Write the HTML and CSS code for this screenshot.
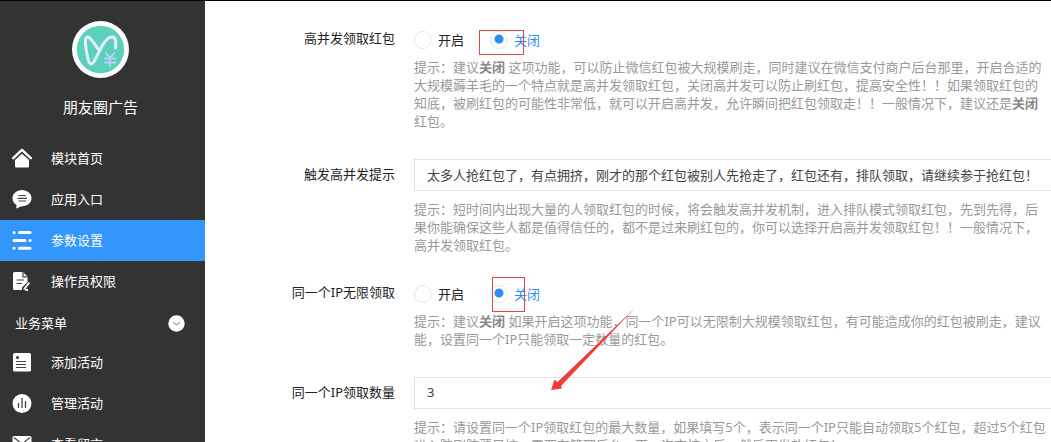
FILE: index.html
```html
<!DOCTYPE html>
<html lang="zh-CN">
<head>
<meta charset="utf-8">
<title>参数设置</title>
<link rel="stylesheet" href="styles.css">
</head>
<body>
<div class="app">
  <aside class="sidebar">
    <div class="profile">
      <svg class="avatar" viewBox="0 0 57 57" aria-hidden="true">
        <circle cx="28.5" cy="28.5" r="28.5" fill="#fff"/>
        <circle cx="28.5" cy="28.5" r="23.7" fill="#5bd0bb"/>
        <g fill="none" stroke="#e6edff" stroke-linecap="round" stroke-linejoin="round">
          <path stroke-width="3" d="M27.500 30C22 22 18 16 15.500 16C12 16 13.500 25 15 33C16 39 17 43 19 43C22 43 25 34 29 27C32 21 36 16 40 16C44.500 16 44 21 43.500 27"/>
          <path stroke="#b9d2fb" stroke-width="2" d="M34 32L38 37L42 32M38 37V45M33 37.500H43.500M33 41.500H43.500"/>
        </g>
      </svg>
      <div class="name">朋友圈广告</div>
    </div>
    <nav class="menu">
      <a class="item" href="#">
        <svg class="icon" viewBox="0 0 20 20"><path d="M1.200 10.200L10 1.800L18.800 10.200" fill="none" stroke="#fff" stroke-width="2.400" stroke-linecap="round" stroke-linejoin="round"/><path fill="#fff" d="M10 5.800L17 12V18.500Q17 19.500 16 19.500H4Q3 19.500 3 18.500V12Z"/></svg>
        模块首页</a>
      <a class="item" href="#">
        <svg class="icon" viewBox="0 0 20 20"><path fill="#fff" d="M10 1C15.500 1 19.500 4.800 19.500 9.200C19.500 14 15 17 10.500 17.200C8.500 17.400 7 18.500 4.200 19.600L4.500 16C2 14.500 .5 12 .5 9.200C.5 4.800 4.500 1 10 1Z"/><path d="M6.500 6.500H14M5.500 9.300H15M6.500 12H14" stroke="#444" stroke-width="1.200"/></svg>
        应用入口</a>
      <a class="item active" href="#" aria-current="page">
        <svg class="icon" viewBox="0 0 20 20"><path d="M2 2.500H2.100M7.500 2.500H18M2 10.500H13M18 10.500H18.100M2 18.300H2.100M7.500 18.300H18" stroke="#fff" stroke-width="3" stroke-linecap="round"/></svg>
        参数设置</a>
      <a class="item" href="#">
        <svg class="icon" viewBox="0 0 20 20"><path fill="#fff" d="M2.500 1H11L15.500 5.500V11L10 16.500V19H2.500Q1 19 1 17.500V2.500Q1 1 2.500 1Z"/><path fill="none" stroke="#444" stroke-width="1.200" d="M11 1V5.800H15.500M4.500 9H12M4.500 12.500H10"/><path d="M17.300 11.500L12 18.500M13.500 19H16" stroke="#fff" stroke-width="2"/></svg>
        操作员权限</a>
      <button class="section" type="button">业务菜单
        <svg class="chevron" viewBox="0 0 17 17" aria-hidden="true"><circle cx="8.500" cy="8.500" r="8.200" fill="#fff"/><path d="M5 7.200L8.500 10L12 7.200" fill="none" stroke="#aaa" stroke-width="1.300"/></svg>
      </button>
      <a class="item" href="#">
        <svg class="icon" viewBox="0 0 20 20"><rect x="1" y="1" width="18" height="18.500" rx="1.500" fill="#fff"/><circle cx="5.500" cy="5.500" r="1.500" fill="#333"/><path d="M4 9.500H14M4 12.500H14M4 15.500H14" stroke="#444" stroke-width="1.200"/></svg>
        添加活动</a>
      <a class="item" href="#">
        <svg class="icon" viewBox="0 0 20 20"><circle cx="10" cy="10.500" r="9.500" fill="#fff"/><path d="M6.500 10V15M10 5V15M13.500 8V15" stroke="#444" stroke-width="1.300"/></svg>
        管理活动</a>
      <a class="item" href="#">
        <svg class="icon" viewBox="0 0 20 20"><rect x=".5" y="2" width="19" height="16" rx="1.500" fill="#fff"/><path d="M2 3.500L10 10L18 3.500" fill="none" stroke="#444" stroke-width="1.200"/></svg>
        查看留言</a>
    </nav>
  </aside>

  <main class="main">
    <form class="form">
      <div class="row" role="radiogroup" aria-labelledby="l1">
        <span class="label" id="l1">高并发领取红包</span>
        <div class="field">
          <div class="choices">
            <label class="choice"><input type="radio" name="burst">开启</label>
            <label class="choice"><input type="radio" name="burst" checked>关闭</label>
          </div>
          <p class="help">提示：建议<b>关闭</b> 这项功能，可以防止微信红包被大规模刷走，同时建议在微信支付商户后台那里，开启合适的<br>大规模薅羊毛的一个特点就是高并发领取红包，关闭高并发可以防止刷红包，提高安全性！！如果领取红包的<br>知底，被刷红包的可能性非常低，就可以开启高并发，允许瞬间把红包领取走！！一般情况下，建议还是<b>关闭</b><br>红包。</p>
        </div>
      </div>
      <div class="row tall">
        <label class="label" for="tip">触发高并发提示</label>
        <div class="field">
          <input class="text" id="tip" type="text" value="太多人抢红包了，有点拥挤，刚才的那个红包被别人先抢走了，红包还有，排队领取，请继续参于抢红包！">
          <p class="help">提示：短时间内出现大量的人领取红包的时候，将会触发高并发机制，进入排队模式领取红包，先到先得，后<br>果你能确保这些人都是值得信任的，都不是过来刷红包的，你可以选择开启高并发领取红包！！一般情况下，<br>高并发领取红包。</p>
        </div>
      </div>
      <div class="row" role="radiogroup" aria-labelledby="l3">
        <span class="label" id="l3">同一个IP无限领取</span>
        <div class="field">
          <div class="choices">
            <label class="choice"><input type="radio" name="ip">开启</label>
            <label class="choice"><input type="radio" name="ip" checked>关闭</label>
          </div>
          <p class="help">提示：建议<b>关闭</b> 如果开启这项功能，同一个IP可以无限制大规模领取红包，有可能造成你的红包被刷走，建议<br>能，设置同一个IP只能领取一定数量的红包。</p>
        </div>
      </div>
      <div class="row tall">
        <label class="label" for="count">同一个IP领取数量</label>
        <div class="field">
          <input class="text" id="count" type="text" value="3">
          <p class="help">提示：请设置同一个IP领取红包的最大数量，如果填写5个，表示同一个IP只能自动领取5个红包，超过5个红包<br>进入防刷防薅风控，需要在管理后台，再一次审核之后，然后再发放红包！</p>
        </div>
      </div>
    </form>
    <svg class="marks" width="846" height="442" viewBox="205 0 846 442" aria-hidden="true">
      <g fill="none" stroke="#d9484f">
        <rect x="479.500" y="30.500" width="44" height="24"/>
        <rect x="492.500" y="277.500" width="32" height="34"/>
      </g>
      <path fill="#f23c3a" d="M635 308L561 386L562 388.500L551 390L554.500 379.500L557.500 382Z"/>
    </svg>
  </main>
</div>
</body>
</html>
```
FILE: styles.css
```css
* { box-sizing: border-box; }

body {
  margin: 0;
  font-family: "Noto Sans", "Noto Sans CJK SC", sans-serif;
  font-size: 13px;
  line-height: 18px;
  color: #222;
  background: #fff;
}

.app {
  display: flex;
  height: 100vh;
  overflow: hidden;
  border-top: 1px solid #000;
}

.sidebar {
  flex: 0 0 205px;
  background: #333;
  color: #fff;
  overflow: hidden;
}

.profile {
  display: flex;
  flex-direction: column;
  align-items: center;
  gap: 18px;
  height: 137px;
  padding: 20px 4px 0 0;
}

.avatar { width: 57px; height: 57px; }
.name { font-size: 15px; line-height: 22px; }

.item {
  display: flex;
  align-items: center;
  gap: 19px;
  height: 41px;
  padding: 0 12px 2px;
  color: #fff;
  text-decoration: none;
}

.item.active { background: #3296fa; }
.icon { flex: none; width: 20px; height: 20px; }

.section {
  display: flex;
  align-items: center;
  justify-content: space-between;
  width: 100%;
  height: 40px;
  padding: 2px 20px 0 15px;
  border: 0;
  background: none;
  color: #fff;
  font: inherit;
}

.chevron { width: 17px; height: 17px; }

.main {
  position: relative;
  flex: 1;
  min-width: 0;
  overflow: hidden;
}

.form {
  min-width: 880px;
  padding-top: 22px;
}

.row {
  display: flex;
  gap: 19px;
  margin-bottom: 29px;
}

.row.tall { margin-bottom: 23px; }

.label {
  flex: 0 0 190px;
  line-height: 30px;
  text-align: right;
}

.field { flex: 1; }

.choices {
  display: flex;
  gap: 26px;
  height: 33px;
}

.choice {
  display: flex;
  align-items: center;
  gap: 6px;
}

.choice input {
  appearance: none;
  width: 18px;
  height: 18px;
  margin: 0;
  border: 1px solid #e6e6e6;
  border-radius: 50%;
}

.choice input:checked {
  background: radial-gradient(circle at 50% 44%, #2d8cf0 4px, transparent 5px);
}

.choice:has(:checked) { color: #2d8cf0; }

.help {
  margin: 2px 0 0;
  color: #999;
  white-space: nowrap;
}

.help b { color: #888; }
.tall .help { margin-top: 9px; }

.text {
  display: block;
  width: 100%;
  height: 32px;
  padding: 0 12px 2px;
  border: 1px solid #e2e2e2;
  background: #fff;
  color: #444;
  font: inherit;
}

.marks {
  position: absolute;
  top: -1px;
  left: 0;
  pointer-events: none;
}
```
